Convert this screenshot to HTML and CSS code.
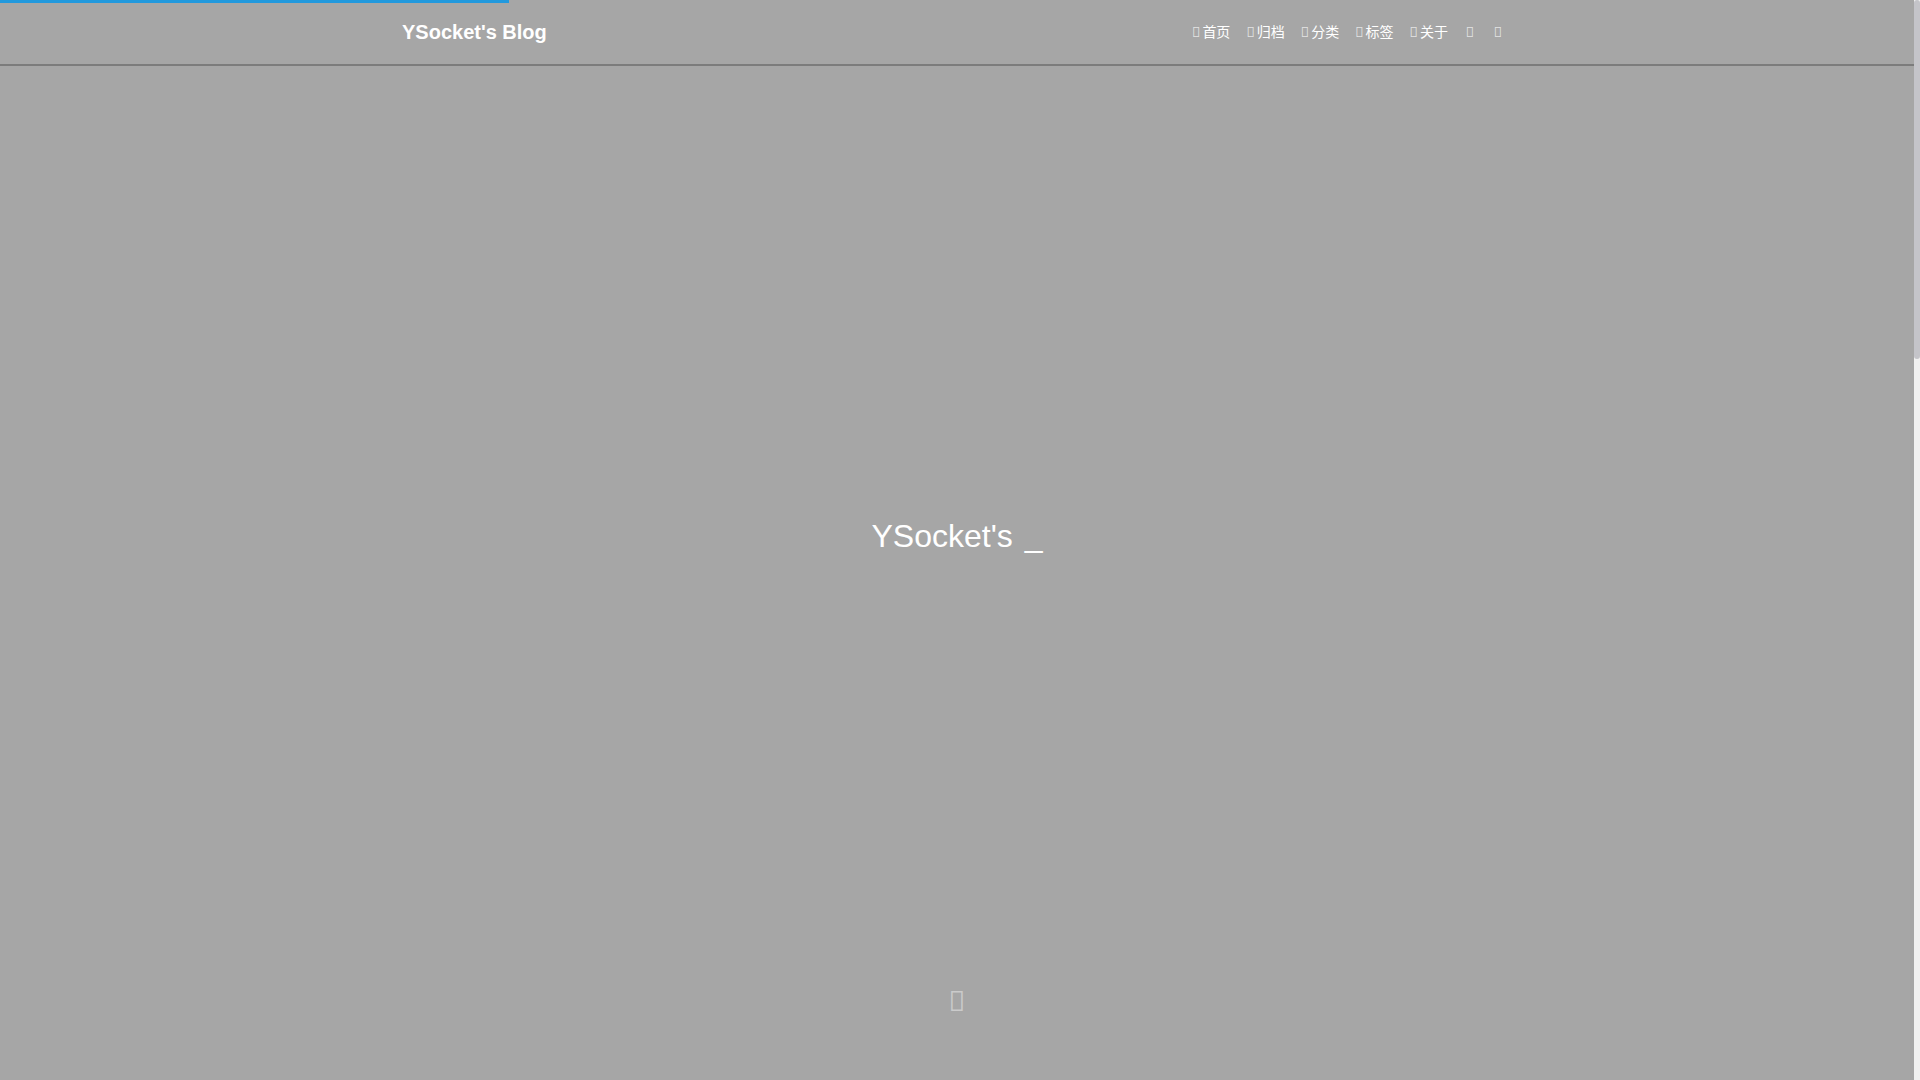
FILE: index.html
```html
<!DOCTYPE html>
<html lang="zh-CN">
<head>
    <meta charset="UTF-8">
    <meta name="viewport" content="width=device-width, initial-scale=1.0">
    <title>YSocket's Blog</title>
    <link rel="stylesheet" href="styles.css">
</head>
<body>
    <div class="progress"></div>
    <div class="page">
        <header class="navbar">
            <div class="container">
                <a class="brand" href="#">YSocket's Blog</a>
                <nav class="menu">
                    <a href="#"><i class="icon">&#xe626;</i>首页</a>
                    <a href="#"><i class="icon">&#xe60d;</i>归档</a>
                    <a href="#"><i class="icon">&#xe61c;</i>分类</a>
                    <a href="#"><i class="icon">&#xe62b;</i>标签</a>
                    <a href="#"><i class="icon">&#xe62c;</i>关于</a>
                    <button type="button" aria-label="搜索"><i class="icon">&#xe618;</i></button>
                    <button type="button" aria-label="切换主题"><i class="icon">&#xe61f;</i></button>
                </nav>
            </div>
        </header>
        <main class="banner">
            <h1 class="subtitle">YSocket's <span class="cursor">_</span></h1>
            <a class="scroll-down" href="#" aria-label="向下滚动"><i class="icon">&#xe60b;</i></a>
        </main>
    </div>
    <div class="scrollbar"><div class="thumb"></div></div>
</body>
</html>
```

FILE: styles.css
```css
body {
    margin: 0;
    display: flex;
    height: 100vh;
    overflow: hidden;
    font-family: "Liberation Sans", "Noto Sans CJK SC", sans-serif;
    font-size: 14px;
    color: #fff;
    background-color: #a6a6a6;
}
a {
    color: inherit;
    text-decoration: none;
}
.progress {
    position: absolute;
    top: 0;
    left: 0;
    width: 26.5%;
    height: 3px;
    background-color: #2299dd;
}
.page {
    flex: 1;
    display: flex;
    flex-direction: column;
}
.navbar {
    border-bottom: 2px solid #7c7c7c;
}
.container {
    max-width: 1110px;
    height: 64px;
    margin: 0 auto;
    display: flex;
    justify-content: space-between;
    align-items: center;
}
.brand {
    font-size: 20px;
    font-weight: bold;
}
.menu {
    display: flex;
    align-items: center;
    line-height: 20px;
}
.menu a {
    display: flex;
    align-items: center;
    gap: 2px;
    padding: 0 8px;
}
.menu button {
    display: flex;
    justify-content: center;
    width: 28px;
    padding: 0;
    border: none;
    background: none;
    color: inherit;
    font: inherit;
    cursor: pointer;
}
.icon {
    font-family: "Noto Sans", sans-serif;
    font-style: normal;
    opacity: 0.7;
}
.banner {
    flex: 1;
    display: flex;
    flex-direction: column;
    align-items: center;
}
.subtitle {
    flex: 1;
    display: flex;
    align-items: center;
    gap: 12px;
    margin: 0;
    padding-top: 20px;
    font-size: 32px;
    font-weight: normal;
}
.scroll-down {
    display: flex;
    padding-bottom: 66px;
    font-size: 28px;
    line-height: 28px;
    opacity: 0.6;
}
.scrollbar {
    width: 6px;
    background-color: #f1f1f1;
}
.thumb {
    height: 33.2%;
    border-radius: 6px;
    background-color: #c4c4c9;
}
```
